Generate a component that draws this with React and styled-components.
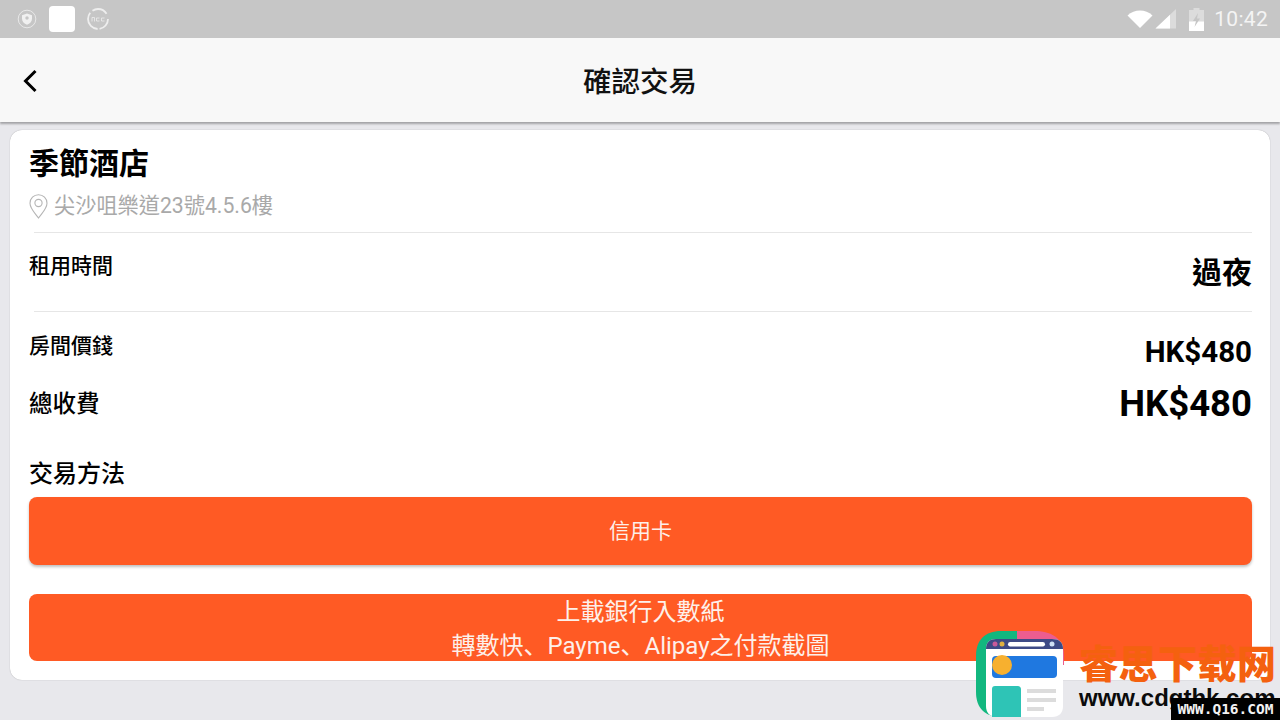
import React from 'react'
import styled, { createGlobalStyle } from 'styled-components'

const CJK = `Roboto, "Noto Sans CJK TC", sans-serif`

const GlobalStyle = createGlobalStyle`
  html, body {
    margin: 0;
    padding: 0;
    background: #e8e8ec;
    font-family: ${CJK};
  }
  * { box-sizing: border-box; }
`

const Screen = styled.div`
  position: relative;
  width: 1280px;
  height: 720px;
  overflow: hidden;
  background: #e8e8ec;
`

const StatusBar = styled.div`
  height: 38px;
  background: #c6c6c6;
  display: flex;
  align-items: center;
  justify-content: space-between;
  padding: 0 12px 0 17px;
  color: #fff;
`

const StatusGroup = styled.div`
  display: flex;
  align-items: center;
  gap: ${(p) => p.gap || 0}px;
`

const AppSquare = styled.div`
  width: 26px;
  height: 26px;
  border-radius: 4px;
  background: #fff;
`

const Clock = styled.span`
  font-size: 21px;
  color: #f4f4f4;
  margin-left: 10px;
  letter-spacing: 0.3px;
`

const Header = styled.header`
  position: relative;
  height: 84px;
  padding-top: 5px;
  background: #f8f8f8;
  box-shadow: 0 2px 2px rgba(0, 0, 0, 0.3);
  display: flex;
  align-items: center;
  justify-content: center;
`

const BackButton = styled.div`
  position: absolute;
  left: 22px;
  top: 31px;
  width: 16px;
  height: 24px;
  display: flex;
`

const HeaderTitle = styled.h1`
  margin: 0;
  font-size: 28.5px;
  font-weight: 500;
  line-height: 40px;
  color: #111;
`

const Card = styled.main`
  margin: 8px 10px 0 10px;
  height: 550px;
  background: #fff;
  border-radius: 12px;
  box-shadow: 0 0 1px rgba(0, 0, 0, 0.35);
  padding: 14px 18px 0 19px;
  display: flex;
  flex-direction: column;
`

const HotelName = styled.h2`
  margin: 0;
  font-size: 30px;
  font-weight: 700;
  line-height: 40px;
  color: #000;
`

const Address = styled.div`
  display: flex;
  align-items: center;
  gap: 6px;
  margin-top: 7px;
  font-size: 21.2px;
  line-height: 30px;
  color: #a9a9a9;
`

const Divider = styled.div`
  height: 1px;
  background: #e6e6e6;
  margin-left: 5px;
  margin-top: ${(p) => p.top || 0}px;
`

const Row = styled.div`
  display: flex;
  justify-content: space-between;
  align-items: flex-start;
  height: ${(p) => p.h}px;
  padding-top: ${(p) => p.pad || 0}px;
`

const Label = styled.span`
  font-size: ${(p) => p.size || 21}px;
  font-weight: 500;
  line-height: 30px;
  color: #000;
`

const Value = styled.span`
  font-size: ${(p) => p.size}px;
  font-weight: 700;
  line-height: ${(p) => p.lh}px;
  color: #000;
  margin-top: ${(p) => p.top || 0}px;
`

const MethodTitle = styled.h3`
  margin: 30px 0 0;
  font-size: 24px;
  font-weight: 500;
  line-height: 34px;
  color: #000;
`

const PayButton = styled.button`
  display: flex;
  flex-direction: column;
  align-items: center;
  justify-content: center;
  width: 100%;
  height: ${(p) => p.h}px;
  margin-top: ${(p) => p.top}px;
  border: 0;
  padding: ${(p) => p.drop || 0}px 0 0;
  border-radius: 8px;
  background: #ff5a24;
  color: #fdf0ea;
  font-family: ${CJK};
  font-size: ${(p) => p.size}px;
  line-height: 32px;
  box-shadow: ${(p) => p.raised ? '0 2px 3px rgba(0, 0, 0, 0.25)' : 'none'};
`

// the screenshot's comma sits low-left, the TC font centres it
const Comma = styled.span`
  font-family: "Noto Sans CJK SC", sans-serif;
`

const Watermark = styled.div`
  position: absolute;
  left: 975px;
  top: 630px;
  width: 305px;
  height: 90px;
`

const Logo = styled.svg`
  position: absolute;
  left: 0;
  top: 0;
`

const BrandName = styled.div`
  position: absolute;
  left: 104px;
  top: 6px;
  font-size: 39px;
  font-weight: 900;
  line-height: 50px;
  letter-spacing: 0.5px;
  white-space: nowrap;
  color: #f4610f;
  font-family: "Noto Sans CJK SC", sans-serif;
`

const BrandUrl = styled.div`
  position: absolute;
  left: 104px;
  top: 52px;
  font-family: "Liberation Sans", sans-serif;
  font-size: 24px;
  font-weight: 700;
  line-height: 32px;
  white-space: nowrap;
  color: #0b0b0b;
`

const Stamp = styled.div`
  position: absolute;
  right: 0;
  bottom: 0;
  width: 109px;
  height: 22px;
  background: #000;
  color: #f2f2f2;
  font-family: "DejaVu Sans Mono", monospace;
  font-size: 14.500px;
  font-weight: 700;
  line-height: 22px;
  text-align: center;
  white-space: nowrap;
`

const ShieldIcon = () => (
  <svg width="20" height="20" viewBox="0 0 20 20">
    <circle cx="10" cy="10" r="8.8" fill="none" stroke="#f0f0f0" strokeWidth="0.8" />
    <path d="M10 4.500l5 1.700v3.600c0 3-2.200 5-5 6-2.800-1-5-3-5-6V6.200z" fill="#f0f0f0" />
    <circle cx="10" cy="9" r="1.700" fill="#c6c6c6" />
  </svg>
)

const RingIcon = () => (
  <svg width="24" height="24" viewBox="0 0 24 24" style={{ marginLeft: -1 }}>
    <circle cx="12" cy="12" r="10" fill="none" stroke="#eee" strokeWidth="1.800" strokeDasharray="14 2 22 3 16 6" />
    <path d="M6 14.500v-4h2.500v4M10.500 11h3M10.500 14h3M10.500 11v3M15.500 11h3M15.500 14h3M15.500 11v3" fill="none" stroke="#eee" strokeWidth="0.800" />
  </svg>
)

const WifiIcon = () => (
  <svg width="26" height="20" viewBox="0 0 26 20">
    <path d="M0.500 6.500C4 3 8.500 1.500 13 1.500s9 1.500 12.500 5L13 19z" fill="#fff" />
  </svg>
)

const SignalIcon = () => (
  <svg width="22" height="20" viewBox="0 0 22 20" style={{ marginLeft: 2 }}>
    <path d="M0.500 19.500L21 0v19.500z" fill="#dcdcdc" />
    <path d="M0.500 19.500L15 5.700v13.800z" fill="#fff" />
  </svg>
)

const BatteryIcon = () => (
  <svg width="15" height="23" viewBox="0 0 15 23" style={{ marginLeft: 12 }}>
    <path d="M4.500 0h6v2H15v21H0V2h4.500z" fill="#dcdcdc" />
    <path d="M0 13.500h15V23H0z" fill="#fff" />
    <path d="M9 5L4 13h3l-1.500 6L11 10.500H8z" fill="#c6c6c6" />
  </svg>
)

const BackIcon = () => (
  <svg width="16" height="24" viewBox="0 0 16 24">
    <path d="M13.500 2L3.500 12l10 10" fill="none" stroke="#000" strokeWidth="3" />
  </svg>
)

const PinIcon = () => (
  <svg width="19" height="25" viewBox="0 0 19 25">
    <path d="M9.500 24C6 19 1 14.500 1 9.200a8.500 8.500 0 0 1 17 0C18 14.500 13 19 9.500 24z" fill="none" stroke="#b5b5b5" strokeWidth="1.100" />
    <circle cx="9.500" cy="9" r="3.600" fill="none" stroke="#b5b5b5" strokeWidth="1.100" />
  </svg>
)

const SiteLogo = () => (
  <Logo width="90" height="90" viewBox="0 0 90 90">
    <path d="M30 1h30c14 0 29 6 29 24v10H30z" fill="#ec5d8f" />
    <path d="M26 1H42v86H26C10 87 1 78 1 62V26C1 10 10 1 26 1z" fill="#12b77f" />
    <path d="M11 19c0-7 4-10 10-10h56c7 0 11 3 11 10v57c0 7-4 11-11 11H22c-7 0-11-4-11-11z" fill="#fff" />
    <path d="M11 19c0-7 4-10 10-10h56c7 0 11 3 11 10z" fill="#3d4a86" />
    <circle cx="20" cy="14" r="2.500" fill="#c85a9a" />
    <circle cx="27" cy="14" r="2.500" fill="#e0b040" />
    <rect x="33" y="12" width="37" height="4.500" rx="2.200" fill="#fff" />
    <circle cx="77" cy="14" r="2.500" fill="#cfe0f5" />
    <rect x="17" y="26" width="65" height="22" rx="4" fill="#1f78e0" />
    <circle cx="27" cy="35" r="10" fill="#f7b02f" />
    <path d="M17 59c0-2 1-3 3-3h22c3 0 4 1 4 4v27H17z" fill="#2ec4b6" />
    <rect x="52" y="59" width="29" height="4" fill="#dcdcdc" />
    <rect x="52" y="68" width="29" height="4" fill="#dcdcdc" />
    <rect x="52" y="77" width="17" height="4" fill="#dcdcdc" />
  </Logo>
)

export default function App() {
  return (
    <Screen>
      <GlobalStyle />
      <StatusBar>
        <StatusGroup gap={12}>
          <ShieldIcon />
          <AppSquare />
          <RingIcon />
        </StatusGroup>
        <StatusGroup>
          <WifiIcon />
          <SignalIcon />
          <BatteryIcon />
          <Clock>10:42</Clock>
        </StatusGroup>
      </StatusBar>
      <Header>
        <BackButton><BackIcon /></BackButton>
        <HeaderTitle>確認交易</HeaderTitle>
      </Header>
      <Card>
        <HotelName>季節酒店</HotelName>
        <Address><PinIcon />尖沙咀樂道23號4.5.6樓</Address>
        <Divider top={11} />
        <Row h={78} pad={18}>
          <Label>租用時間</Label>
          <Value size={30} lh={40} top={2}>過夜</Value>
        </Row>
        <Divider />
        <Row h={57} pad={19}>
          <Label>房間價錢</Label>
          <Value size={29.500} lh={40} top={1}>HK$480</Value>
        </Row>
        <Row h={58} pad={20}>
          <Label size={23.500}>總收費</Label>
          <Value size={36.500} lh={44} top={-7}>HK$480</Value>
        </Row>
        <MethodTitle>交易方法</MethodTitle>
        <PayButton h={68} top={6} size={21} raised>信用卡</PayButton>
        <PayButton h={67} top={29} size={24} drop={3}>
          <span>上載銀行入數紙</span>
          <span>轉數快<Comma>、</Comma>Payme<Comma>、</Comma>Alipay之付款截圖</span>
        </PayButton>
      </Card>
      <Watermark>
        <SiteLogo />
        <BrandName>睿思下载网</BrandName>
        <BrandUrl>www.cdgthk.com</BrandUrl>
        <Stamp>WWW.Q16.COM</Stamp>
      </Watermark>
    </Screen>
  )
}
